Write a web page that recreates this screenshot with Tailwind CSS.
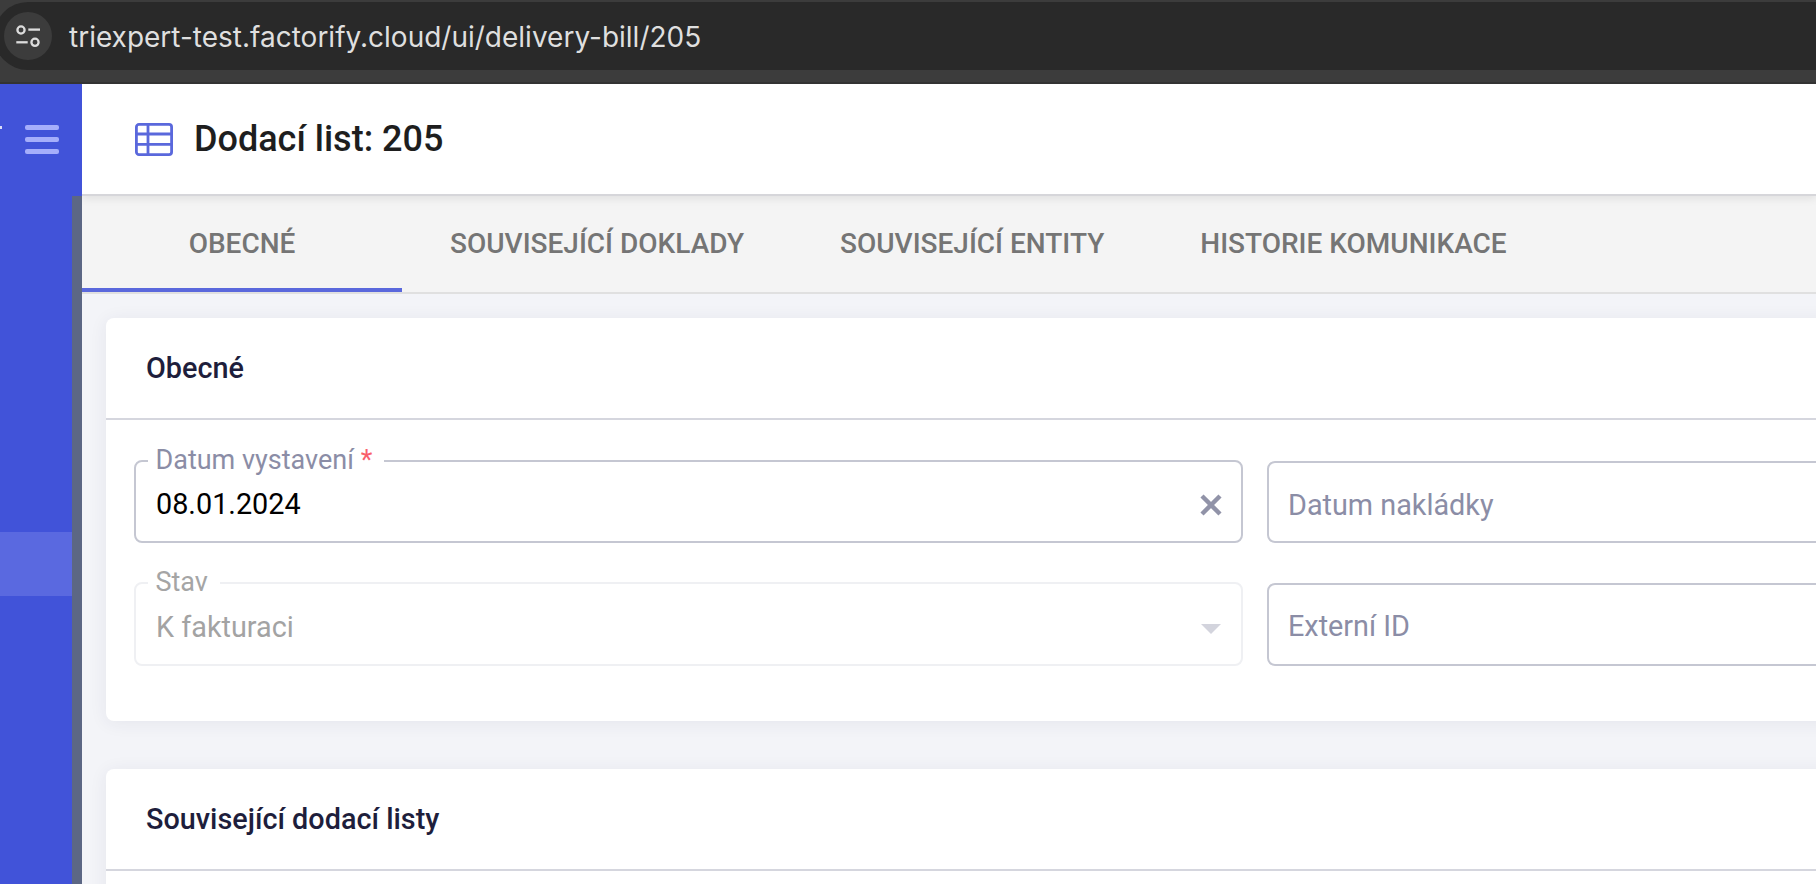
<!DOCTYPE html>
<html lang="cs">
  <head>
    <meta charset="UTF-8" />
    <title>Dodací list: 205</title>
    <script src="https://cdn.jsdelivr.net/npm/@tailwindcss/browser@4"></script>
  </head>
  <body class="h-[884px] w-[1816px] overflow-hidden bg-[#f3f4f8] font-['Roboto',sans-serif]">
    <!-- browser address bar -->
    <div class="h-[84px] bg-[#3c3c3c] pt-[2px] border-b-2 border-[#333333]">
      <div class="-ml-1.5 flex h-[68px] items-center rounded-l-[34px] bg-[#292929] pl-[10px]">
        <div class="flex h-12 w-12 items-center justify-center rounded-full bg-[#3c3c3c]">
          <svg width="48" height="48" viewBox="0 0 48 48" fill="none" stroke="#dcdcdc" stroke-width="2.3">
            <circle cx="17" cy="18" r="3.6" />
            <path d="M24.3 17.6H36" />
            <path d="M12.3 30.3H23.7" />
            <circle cx="31" cy="30.3" r="3.6" />
          </svg>
        </div>
        <span class="ml-[17px] pt-[2px] font-['Inter',sans-serif] text-[28px] text-[#dfdfdf]">triexpert-test.factorify.cloud/ui/delivery-bill/205</span>
      </div>
    </div>

    <div class="flex h-[800px]">
      <!-- sidebar -->
      <aside class="flex w-[82px] shrink-0 flex-col bg-[#4153d9]">
        <div class="relative h-[112px] shrink-0 pl-[25px] pt-[41px]">
          <div class="absolute left-0 top-[42px] h-[3px] w-[2px] bg-white/80"></div>
          <div class="flex w-[34px] flex-col gap-[7.5px]">
            <div class="h-[4.5px] rounded-[2px] bg-[#a5aefb]"></div>
            <div class="h-[4.5px] rounded-[2px] bg-[#a5aefb]"></div>
            <div class="h-[4.5px] rounded-[2px] bg-[#a5aefb]"></div>
          </div>
        </div>
        <div class="flex flex-1">
          <nav class="flex-1 pt-[336px]">
            <div class="h-[64px] bg-[#5a69e0]"></div>
          </nav>
          <div class="w-[10px] bg-[#5c6784]"></div>
        </div>
      </aside>

      <main class="min-w-0 flex-1 overflow-hidden">
        <header class="relative z-10 flex h-[112px] items-center border-b-2 border-[#d6d6da] bg-white pl-[53px] shadow-[0_3px_8px_rgba(0,0,0,0.08)]">
          <svg width="38" height="33" viewBox="0 0 38 33" fill="none" stroke="#5a68dc" stroke-width="2.8">
            <rect x="1.4" y="1.4" width="35.2" height="30.2" rx="2.6" />
            <path d="M13 1.4V31.6M1.4 11H36.6M1.4 21.3H36.6" />
          </svg>
          <h1 class="ml-[21px] text-[36px] font-medium text-[#1e1e1e]">Dodací list: 205</h1>
        </header>

        <div class="flex h-[98px] border-b-2 border-[#e0e0e0] bg-[#f4f4f4] text-[28px] font-medium text-[#757575]">
          <div class="-mb-[2px] flex h-[96px] w-[320px] items-center justify-center border-y-4 border-t-transparent border-b-[#5a68dc]">OBECNÉ</div>
          <div class="flex items-center px-[48px]">SOUVISEJÍCÍ DOKLADY</div>
          <div class="flex items-center px-[48px]">SOUVISEJÍCÍ ENTITY</div>
          <div class="flex items-center px-[48px]">HISTORIE KOMUNIKACE</div>
        </div>

        <div class="w-[2400px] pl-6 pt-[24px]">
          <section class="h-[403px] rounded-lg bg-white shadow-[0_2px_18px_rgba(40,42,90,0.07)]">
            <div class="flex h-[102px] items-center border-b-2 border-[#d5d6de] pl-10 pt-[2px] text-[28.8px] font-medium text-[#1e1e3c]">Obecné</div>
            <div class="grid grid-cols-[1109px_1109px] gap-x-6 gap-y-6 pl-7 pt-[25px] text-[28.8px]">
              <fieldset class="h-[98px] rounded-lg border-2 border-[#c5c7d2]">
                <legend class="ml-[11.5px] pl-2 pr-3 text-[27px] leading-[32px] text-[#8b8da6]"><span class="relative -top-px">Datum vystavení <span class="text-[#f9606b]">*</span></span></legend>
                <div class="-mt-[14px] flex h-[81px] items-center justify-between pl-5 pr-[19px] pt-[2px] text-black">
                  <span>08.01.2024</span>
                  <svg width="22" height="22" viewBox="0 0 22 22" fill="none" stroke="#9193a8" stroke-width="4.4">
                    <path d="M2 2L20 20M20 2L2 20" />
                  </svg>
                </div>
              </fieldset>
              <div class="mt-4 flex h-[82px] items-center rounded-lg border-2 border-[#c5c7d2] pl-[19px] pt-[7px] text-[#8b8da6]">Datum nakládky</div>
              <fieldset class="h-[99px] rounded-lg border-2 border-[#eff0f3]">
                <legend class="ml-[11.5px] pl-2 pr-3 text-[27px] leading-[32px] text-[#a5a5a5]"><span class="relative -top-px">Stav</span></legend>
                <div class="-mt-[14px] flex h-[80px] items-center justify-between pl-5 pr-[19px] pt-[6px] text-[#a3a3a3]">
                  <span>K fakturaci</span>
                  <svg class="mt-[2px]" width="22" height="12" viewBox="0 0 22 12" fill="#d3d4dd">
                    <path d="M1 1H21L11 11Z" />
                  </svg>
                </div>
              </fieldset>
              <div class="mt-4 flex h-[83px] items-center rounded-lg border-2 border-[#c5c7d2] pl-[19px] pt-[5px] text-[#8b8da6]">Externí ID</div>
            </div>
          </section>

          <section class="mt-[48px] h-[200px] rounded-lg bg-white shadow-[0_2px_18px_rgba(40,42,90,0.07)]">
            <div class="flex h-[102px] items-center border-b-2 border-[#d5d6de] pl-10 pt-[2px] text-[28.8px] font-medium text-[#1e1e3c]">Související dodací listy</div>
          </section>
        </div>
      </main>
    </div>
  </body>
</html>
